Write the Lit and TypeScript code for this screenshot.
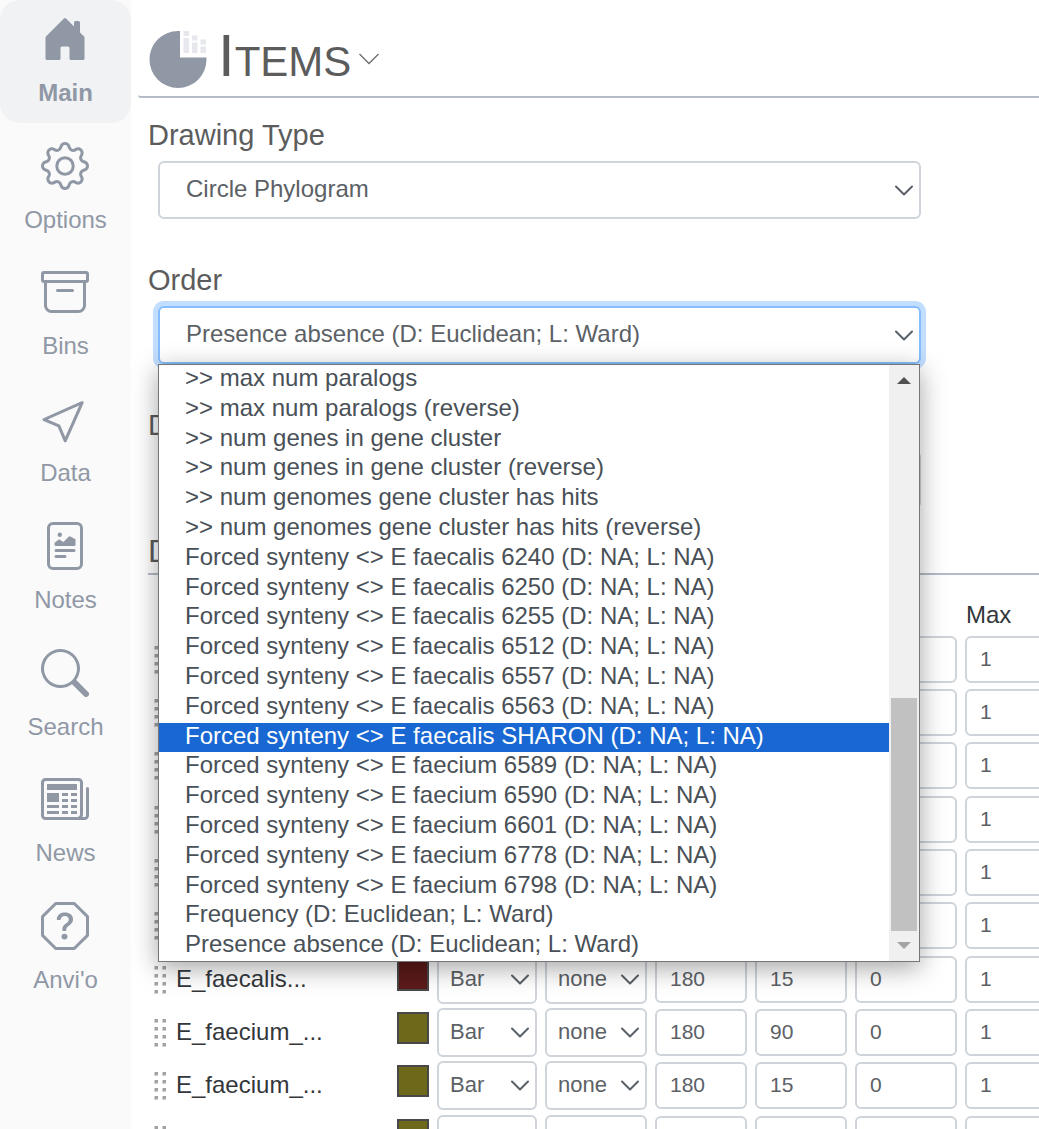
import { LitElement, html, svg, css } from "lit";
import { customElement, property } from "lit/decorators.js";
import { classMap } from "lit/directives/class-map.js";
import { styleMap } from "lit/directives/style-map.js";

const ICONS: Record<string, string[]> = {
  house: [
    "M6.5 10.995V14.5a.5.5 0 0 1-.5.5H2a.5.5 0 0 1-.5-.5v-7a.5.5 0 0 1 .146-.354l6-6a.5.5 0 0 1 .708 0l6 6a.5.5 0 0 1 .146.354v7a.5.5 0 0 1-.5.5h-4a.5.5 0 0 1-.5-.5V11c0-.25-.25-.5-.5-.5H7c-.25 0-.5.25-.5.495z",
    "M13 2.5V6l-2-2V2.5a.5.5 0 0 1 .5-.5h1a.5.5 0 0 1 .5.5z",
  ],
  gear: [
    "M8 4.754a3.246 3.246 0 1 0 0 6.492 3.246 3.246 0 0 0 0-6.492zM5.754 8a2.246 2.246 0 1 1 4.492 0 2.246 2.246 0 0 1-4.492 0z",
    "M9.796 1.343c-.527-1.79-3.065-1.79-3.592 0l-.094.319a.873.873 0 0 1-1.255.52l-.292-.16c-1.64-.892-3.433.902-2.54 2.541l.159.292a.873.873 0 0 1-.52 1.255l-.319.094c-1.79.527-1.79 3.065 0 3.592l.319.094a.873.873 0 0 1 .52 1.255l-.16.292c-.892 1.64.901 3.434 2.541 2.54l.292-.159a.873.873 0 0 1 1.255.52l.094.319c.527 1.79 3.065 1.79 3.592 0l.094-.319a.873.873 0 0 1 1.255-.52l.292.16c1.64.893 3.434-.902 2.54-2.541l-.159-.292a.873.873 0 0 1 .52-1.255l.319-.094c1.79-.527 1.79-3.065 0-3.592l-.319-.094a.873.873 0 0 1-.52-1.255l.16-.292c.893-1.64-.902-3.433-2.541-2.54l-.292.159a.873.873 0 0 1-1.255-.52l-.094-.319zm-2.633.283c.246-.835 1.428-.835 1.674 0l.094.319a1.873 1.873 0 0 0 2.693 1.115l.291-.16c.764-.415 1.6.42 1.184 1.185l-.159.292a1.873 1.873 0 0 0 1.116 2.692l.318.094c.835.246.835 1.428 0 1.674l-.319.094a1.873 1.873 0 0 0-1.115 2.693l.16.291c.415.764-.42 1.6-1.185 1.184l-.291-.159a1.873 1.873 0 0 0-2.693 1.116l-.094.318c-.246.835-1.428.835-1.674 0l-.094-.319a1.873 1.873 0 0 0-2.692-1.115l-.292.16c-.764.415-1.6-.42-1.184-1.185l.159-.291A1.873 1.873 0 0 0 1.945 8.93l-.319-.094c-.835-.246-.835-1.428 0-1.674l.319-.094A1.873 1.873 0 0 0 3.06 4.377l-.16-.292c-.415-.764.42-1.6 1.185-1.184l.292.159a1.873 1.873 0 0 0 2.692-1.115l.094-.319z",
  ],
  archive: [
    "M0 2a1 1 0 0 1 1-1h14a1 1 0 0 1 1 1v2a1 1 0 0 1-1 1v7.5a2.5 2.5 0 0 1-2.5 2.5h-9A2.5 2.5 0 0 1 1 12.5V5a1 1 0 0 1-1-1V2zm2 3v7.5A1.5 1.5 0 0 0 3.5 14h9a1.5 1.5 0 0 0 1.5-1.5V5H2zm13-3H1v2h14V2zM5 7.5a.5.5 0 0 1 .5-.5h5a.5.5 0 0 1 0 1h-5a.5.5 0 0 1-.5-.5z",
  ],
  cursor: [
    "M14.082 2.182a.5.5 0 0 1 .103.557L8.528 15.467a.5.5 0 0 1-.917-.007L5.57 10.694.803 8.652a.5.5 0 0 1-.006-.916l12.728-5.657a.5.5 0 0 1 .556.103zM2.25 8.184l3.897 1.67a.5.5 0 0 1 .262.263l1.67 3.897L12.743 3.52 2.25 8.184z",
  ],
  richtext: [
    "M7 4.25a.75.75 0 1 1-1.5 0 .75.75 0 0 1 1.5 0zm-.861 1.542 1.33.886 1.854-1.855a.25.25 0 0 1 .289-.047l1.888.974V7.5a.5.5 0 0 1-.5.5H5a.5.5 0 0 1-.5-.5V7s1.54-1.274 1.639-1.208zM5 9a.5.5 0 0 0 0 1h6a.5.5 0 0 0 0-1H5zm0 2a.5.5 0 0 0 0 1h3a.5.5 0 0 0 0-1H5z",
    "M4 0a2 2 0 0 0-2 2v12a2 2 0 0 0 2 2h8a2 2 0 0 0 2-2V2a2 2 0 0 0-2-2H4zm0 1h8a1 1 0 0 1 1 1v12a1 1 0 0 1-1 1H4a1 1 0 0 1-1-1V2a1 1 0 0 1 1-1z",
  ],
  search: [
    "M11.742 10.344a6.5 6.5 0 1 0-1.397 1.398h-.001c.03.04.062.078.098.115l3.85 3.85a1 1 0 0 0 1.415-1.414l-3.85-3.85a1.007 1.007 0 0 0-.115-.1zM12 6.5a5.5 5.5 0 1 1-11 0 5.5 5.5 0 0 1 11 0z",
  ],
  newspaper: [
    "M0 2.5A1.5 1.5 0 0 1 1.5 1h11A1.5 1.5 0 0 1 14 2.5v10.528c0 .3-.05.654-.238.972h.738a.5.5 0 0 0 .5-.5v-9a.5.5 0 0 1 1 0v9a1.5 1.5 0 0 1-1.5 1.5H1.497A1.497 1.497 0 0 1 0 13.5v-11zM12 14c.37 0 .654-.211.853-.441.092-.106.147-.279.147-.531V2.5a.5.5 0 0 0-.5-.5h-11a.5.5 0 0 0-.5.5v11c0 .278.223.5.497.5H12z",
    "M2 3h10v2H2V3zm0 3h4v3H2V6zm0 4h4v1H2v-1zm0 2h4v1H2v-1zm5-6h2v1H7V6zm3 0h2v1h-2V6zM7 8h2v1H7V8zm3 0h2v1h-2V8zm-3 2h2v1H7v-1zm3 0h2v1h-2v-1zm-3 2h2v1H7v-1zm3 0h2v1h-2v-1z",
  ],
  question: [
    "M4.54.146A.5.5 0 0 1 4.893 0h6.214a.5.5 0 0 1 .353.146l4.394 4.394a.5.5 0 0 1 .146.353v6.214a.5.5 0 0 1-.146.353l-4.394 4.394a.5.5 0 0 1-.353.146H4.893a.5.5 0 0 1-.353-.146L.146 11.46A.5.5 0 0 1 0 11.107V4.893a.5.5 0 0 1 .146-.353L4.54.146zM5.1 1 1 5.1v5.8L5.1 15h5.8l4.1-4.1V5.1L10.9 1H5.1z",
    "M5.255 5.786a.237.237 0 0 0 .241.247h.825c.138 0 .248-.113.266-.25.09-.656.54-1.134 1.342-1.134.686 0 1.314.343 1.314 1.168 0 .635-.374.927-.965 1.371-.673.489-1.206 1.06-1.168 1.987l.003.217a.25.25 0 0 0 .25.246h.811a.25.25 0 0 0 .25-.25v-.105c0-.718.273-.927 1.01-1.486.609-.463 1.244-.977 1.244-2.056 0-1.511-1.276-2.241-2.673-2.241-1.267 0-2.655.59-2.75 2.286zm1.557 5.763c0 .533.425.927 1.01.927.609 0 1.028-.394 1.028-.927 0-.552-.42-.94-1.029-.94-.584 0-1.009.388-1.009.94z",
  ],
};

const NAV = [
  { label: "Main", icon: "house", active: true },
  { label: "Options", icon: "gear" },
  { label: "Bins", icon: "archive" },
  { label: "Data", icon: "cursor" },
  { label: "Notes", icon: "richtext" },
  { label: "Search", icon: "search" },
  { label: "News", icon: "newspaper" },
  { label: "Anvi'o", icon: "question" },
];

const synteny = (name: string) => `Forced synteny <> E ${name} (D: NA; L: NA)`;

const ORDERS = [
  ">> max num paralogs",
  ">> max num paralogs (reverse)",
  ">> num genes in gene cluster",
  ">> num genes in gene cluster (reverse)",
  ">> num genomes gene cluster has hits",
  ">> num genomes gene cluster has hits (reverse)",
  ...["6240", "6250", "6255", "6512", "6557", "6563", "SHARON"].map((n) => synteny(`faecalis ${n}`)),
  ...["6589", "6590", "6601", "6778", "6798"].map((n) => synteny(`faecium ${n}`)),
  "Frequency (D: Euclidean; L: Ward)",
  "Presence absence (D: Euclidean; L: Ward)",
];
const HIGHLIGHTED = 12;

interface Layer {
  name?: string;
  color: string;
  type?: string;
  norm?: string;
  height?: number;
  margin?: number;
  min?: number;
  max: number;
}

const RED = "#5c1a1a";
const OLIVE = "#6e681a";
const BAR = { type: "Bar", norm: "none", height: 180, min: 0, max: 1 };

const LAYERS: Layer[] = [
  ...Array.from({ length: 6 }, () => ({ color: RED, max: 1 })),
  { ...BAR, name: "E_faecalis...", color: RED, margin: 15 },
  { ...BAR, name: "E_faecium_...", color: OLIVE, margin: 90 },
  { ...BAR, name: "E_faecium_...", color: OLIVE, margin: 15 },
  { ...BAR, name: "E_faecium_...", color: OLIVE, margin: 15 },
];

const chevron = html`
  <svg class="chevron" viewBox="0 0 18 12" aria-hidden="true">
    <path d="M1 1.5l8 8 8-8" fill="none" stroke="#5a6067" stroke-width="2" stroke-linecap="round" stroke-linejoin="round" />
  </svg>
`;

const shared = css`
  * {
    box-sizing: border-box;
  }
  select,
  input,
  button {
    font-family: inherit;
    margin: 0;
  }
  .select {
    position: relative;
  }
  .chevron {
    position: absolute;
    right: 8px;
    top: 50%;
    width: 18px;
    height: 12px;
    margin-top: -6px;
    pointer-events: none;
  }
  select {
    display: block;
    appearance: none;
    width: 100%;
    color: #5c6166;
    background: #fff;
    border: 2px solid #ced4da;
    border-radius: 6px;
    outline: none;
  }
`;

@customElement("side-nav")
export class SideNav extends LitElement {
  static styles = css`
    :host {
      display: block;
      flex: none;
      width: 131px;
      background: #fafafa;
    }
    nav {
      display: flex;
      flex-direction: column;
      justify-content: space-between;
      min-height: 1010px;
    }
    a {
      box-sizing: border-box;
      display: flex;
      flex-direction: column;
      align-items: center;
      gap: 16px;
      height: 123px;
      padding-top: 15px;
      border-radius: 20px;
      color: #9098a6;
      font-size: 24px;
      line-height: 28px;
      text-decoration: none;
    }
    a.active {
      background: #f1f2f4;
      font-weight: bold;
    }
    svg {
      width: 48px;
      height: 48px;
      margin-right: 1px;
      fill: currentColor;
    }
  `;

  render() {
    return html`
      <nav>
        ${NAV.map(
          (item) => html`
            <a href="#" class=${classMap({ active: !!item.active })}>
              <svg viewBox="0 0 16 16" aria-hidden="true">${ICONS[item.icon].map((d) => svg`<path fill-rule="evenodd" d=${d} />`)}</svg>
              ${item.label}
            </a>
          `
        )}
      </nav>
    `;
  }
}

@customElement("order-menu")
export class OrderMenu extends LitElement {
  static styles = css`
    :host {
      display: grid;
      grid-template-columns: 1fr 30px;
      height: 598px;
      background: #fff;
      border: 1px solid #767676;
      box-shadow: 0 6px 24px rgba(0, 0, 0, 0.36);
    }
    ul {
      display: grid;
      grid-template-rows: repeat(20, 1fr);
      margin: 0;
      padding: 0;
      list-style: none;
      color: #495057;
      font-size: 24px;
      line-height: 26px;
    }
    li {
      padding-left: 26px;
      white-space: nowrap;
    }
    .current {
      background: #1967d2;
      color: #fff;
    }
    .scrollbar {
      display: flex;
      flex-direction: column;
      align-items: center;
      background: #f0f0f0;
    }
    .scrollbar svg {
      flex: none;
      width: 30px;
      height: 30px;
    }
    .track {
      flex: 1;
      display: flex;
      flex-direction: column;
      justify-content: flex-end;
      width: 26px;
    }
    .thumb {
      background: #c1c1c1;
    }
  `;

  render() {
    return html`
      <ul role="listbox" aria-label="Order">
        ${ORDERS.map(
          (text, i) => html`<li role="option" aria-selected=${i === HIGHLIGHTED} class=${classMap({ current: i === HIGHLIGHTED })}>${text}</li>`
        )}
      </ul>
      <div class="scrollbar">
        <svg viewBox="0 0 30 30" aria-hidden="true"><path d="M8 19h14l-7-7z" fill="#505050" /></svg>
        <div class="track"><div class="thumb" style=${styleMap({ height: "43.5%" })}></div></div>
        <svg viewBox="0 0 30 30" aria-hidden="true"><path d="M8 11h14l-7 7z" fill="#a3a3a3" /></svg>
      </div>
    `;
  }
}

@customElement("select-field")
export class SelectField extends LitElement {
  @property() label = "";
  @property() value = "";
  @property({ type: Boolean }) open = false;

  static styles = [
    shared,
    css`
      :host {
        display: block;
      }
      label {
        display: block;
        color: #5c5c5c;
        font-size: 29px;
        line-height: 35px;
      }
      .select {
        max-width: 763px;
        margin: 8px 10px 0;
      }
      select {
        height: 58px;
        padding: 0 26px 3px;
        font-size: 24px;
      }
      .chevron {
        margin-top: -5px;
      }
      .open select {
        border-color: #86bdfc;
        box-shadow: 0 0 0 5px #c2deff;
      }
      order-menu {
        position: absolute;
        z-index: 2;
        top: 100%;
        left: 0;
        right: 1px;
      }
    `,
  ];

  render() {
    return html`
      <label for="field">${this.label}</label>
      <div class=${classMap({ select: true, open: this.open })}>
        <select id="field">
          <option>${this.value}</option>
        </select>
        ${chevron} ${this.open ? html`<order-menu></order-menu>` : null}
      </div>
    `;
  }
}

@customElement("layer-table")
export class LayerTable extends LitElement {
  static styles = [
    shared,
    css`
      :host {
        display: block;
      }
      table {
        width: 927px;
        table-layout: fixed;
        border-collapse: collapse;
        color: #33373b;
        font-size: 24px;
        line-height: 28px;
      }
      th {
        height: 60px;
        padding: 20px 0 0 1px;
        font-weight: normal;
        text-align: left;
      }
      .w-grip {
        width: 28px;
      }
      .w-color {
        width: 40px;
      }
      .w-type {
        width: 108px;
      }
      .w-wide {
        width: 110px;
      }
      .w-number {
        width: 100px;
      }
      tbody tr {
        height: 53px;
      }
      tbody tr:nth-child(3n) {
        height: 54px;
      }
      td {
        padding: 0 8px 0 0;
        vertical-align: top;
      }
      td.flush {
        padding: 0;
      }
      .grip {
        display: block;
        width: 14px;
        height: 30px;
        margin: 10px 0 0 5px;
      }
      .name {
        padding-top: 10px;
      }
      .swatch {
        display: block;
        width: 32px;
        height: 32px;
        margin-top: 4px;
        padding: 0;
        border: 2px solid #484848;
        border-radius: 0;
      }
      select {
        height: 49px;
        padding: 0 11px 2px;
        font-size: 22px;
      }
      input {
        display: block;
        width: 100%;
        height: 47px;
        margin-top: 1px;
        padding: 0 13px 2px;
        color: #5c6166;
        background: #fff;
        border: 2px solid #ced4da;
        border-radius: 6px;
        font-size: 21px;
      }
    `,
  ];

  private dropdown(label: string, value = "") {
    return html`
      <td>
        <div class="select">
          <select aria-label=${label}><option>${value}</option></select>
          ${chevron}
        </div>
      </td>
    `;
  }

  private number(label: string, value?: number) {
    return html`<td><input type="text" aria-label=${label} .value=${String(value ?? "")} /></td>`;
  }

  private grip() {
    return html`
      <svg class="grip" viewBox="0 0 14 30" aria-hidden="true">
        ${[0, 8, 16, 24].map((y) =>
          [0, 8].map(
            (x) => svg`<rect x=${x + 1} y=${y + 1} width="4" height="4" fill="#d2d2d2" /><rect x=${x + 2} y=${y + 1} width="3" height="3" fill="#a2a2a2" />`
          )
        )}
      </svg>
    `;
  }

  render() {
    return html`
      <table>
        <colgroup>
          <col class="w-grip" />
          <col />
          <col class="w-color" />
          <col class="w-type" />
          <col class="w-wide" />
          <col class="w-number" />
          <col class="w-number" />
          <col class="w-wide" />
          <col class="w-wide" />
        </colgroup>
        <thead>
          <tr>
            <th colspan="8"></th>
            <th>Max</th>
          </tr>
        </thead>
        <tbody>
          ${LAYERS.map(
            (layer) => html`
              <tr>
                <td class="flush">${this.grip()}</td>
                <td class="name">${layer.name}</td>
                <td class="flush">
                  <button class="swatch" aria-label="Color" style=${styleMap({ background: layer.color })}></button>
                </td>
                ${this.dropdown("Type", layer.type)} ${this.dropdown("Normalization", layer.norm)}
                ${this.number("Height", layer.height)} ${this.number("Margin", layer.margin)}
                ${this.number("Min", layer.min)} ${this.number("Max", layer.max)}
              </tr>
            `
          )}
        </tbody>
      </table>
    `;
  }
}

@customElement("app-root")
export class AppRoot extends LitElement {
  static styles = css`
    * {
      box-sizing: border-box;
    }
    :host {
      display: flex;
      height: 100vh;
      overflow: hidden;
      background: #fff;
      font-family: "Liberation Sans", Arial, sans-serif;
    }
    main {
      flex: 1;
      min-width: 0;
      padding-left: 7px;
      overflow: hidden;
    }
    header {
      display: flex;
      align-items: center;
      height: 98px;
      padding: 22px 0 0 11px;
      border-bottom: 2px solid #b4bac6;
      border-bottom-left-radius: 3px;
    }
    .logo {
      width: 60px;
      height: 60px;
    }
    h1 {
      margin: 0 0 0 9px;
      padding-bottom: 6px;
      color: #5c5c5c;
      font-size: 60px;
      font-weight: normal;
      font-variant: small-caps;
      line-height: 68px;
    }
    .toggle {
      padding: 0;
      margin-left: 7px;
      border: 0;
      background: none;
    }
    .toggle svg {
      display: block;
      width: 22px;
      height: 14px;
    }
    .content {
      padding: 20px 0 0 10px;
    }
    .fields {
      display: flex;
      flex-direction: column;
      gap: 44px;
    }
    h2 {
      height: 43px;
      margin: 23px 0 0;
      border-bottom: 2px solid #b4bac6;
      color: #5c5c5c;
      font-size: 32px;
      font-weight: normal;
      line-height: 38px;
    }
  `;

  render() {
    return html`
      <side-nav></side-nav>
      <main>
        <header>
          <svg class="logo" viewBox="0 0 60 60" aria-hidden="true">
            <path d="M31 2h-2A28.500 28.500 0 1 0 57.500 30.500V28.500H31z" fill="#9098a6" />
            <path
              d="M34.5 2h5.500v5h-5.500zM34.500 9h5.500v15h-5.500zM43 6.500h5.500v5h-5.500zM43 13.500h5.500v10.500h-5.500zM51.500 10.500h5.500v5h-5.500zM51.500 17.500h5.500v6.500h-5.500z"
              fill="#e6e8ed"
            />
          </svg>
          <h1>Items</h1>
          <button class="toggle" aria-label="Toggle items">
            <svg viewBox="0 0 22 14"><path d="M1.500 2l9.500 9.500L20.500 2" fill="none" stroke="#6c6c6c" stroke-width="1.300" /></svg>
          </button>
        </header>
        <div class="content">
          <div class="fields">
            <select-field label="Drawing Type" value="Circle Phylogram"></select-field>
            <select-field label="Order" value="Presence absence (D: Euclidean; L: Ward)" open></select-field>
            <select-field label="D"></select-field>
          </div>
          <h2>D</h2>
          <layer-table></layer-table>
        </div>
      </main>
    `;
  }
}
